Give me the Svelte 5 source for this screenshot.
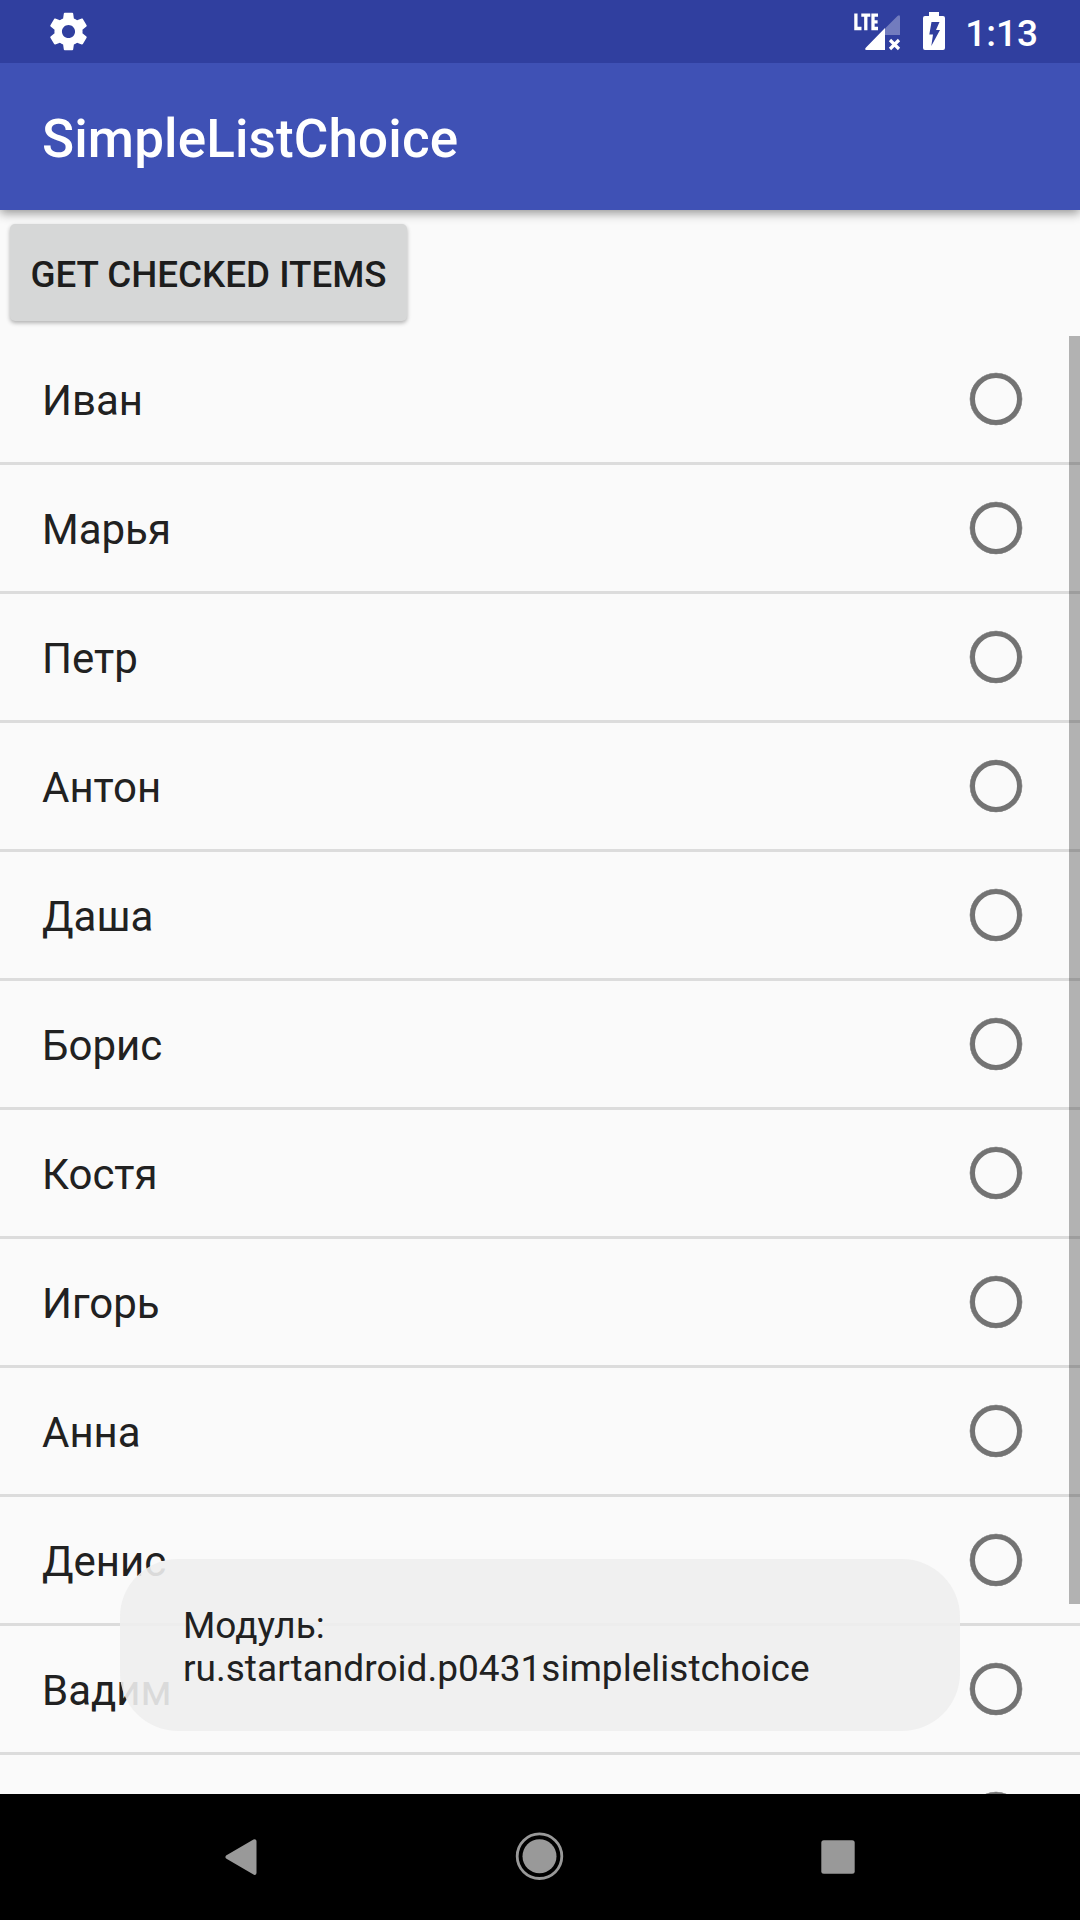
<script>
  const names = [
    'Иван', 'Марья', 'Петр', 'Антон', 'Даша', 'Борис',
    'Костя', 'Игорь', 'Анна', 'Денис', 'Вадим', ''
  ];
  let selected = $state(-1);
</script>

<div class="screen">
  <header class="status">
    <svg class="gear" viewBox="0 0 24 24" width="45" height="45">
      <path fill="#fff" d="M19.43 12.98c.04-.32.07-.64.07-.98s-.03-.66-.07-.98l2.11-1.65c.19-.15.24-.42.12-.64l-2-3.46c-.12-.22-.39-.3-.61-.22l-2.49 1c-.52-.4-1.08-.73-1.69-.98l-.38-2.65A.488.488 0 0 0 14 2h-4c-.25 0-.46.18-.49.42l-.38 2.65c-.61.25-1.17.59-1.69.98l-2.49-1c-.23-.09-.49 0-.61.22l-2 3.46c-.13.22-.07.49.12.64l2.11 1.65c-.04.32-.07.65-.07.98s.03.66.07.98l-2.11 1.65c-.19.15-.24.42-.12.64l2 3.46c.12.22.39.3.61.22l2.49-1c.52.4 1.08.73 1.69.98l.38 2.65c.03.24.24.42.49.42h4c.25 0 .46-.18.49-.42l.38-2.65c.61-.25 1.17-.59 1.69-.98l2.49 1c.23.09.49 0 .61-.22l2-3.46c.12-.22.07-.49-.12-.64l-2.11-1.65zM12 15.500c-1.930 0-3.500-1.570-3.500-3.500s1.570-3.500 3.500-3.500 3.500 1.570 3.500 3.500-1.570 3.500-3.500 3.500z" />
    </svg>
    <div class="tray">
      <svg class="signal" width="50" height="40" viewBox="0 0 50 40">
        <path fill="#fff" fill-opacity=".32" d="M32 16.500 44.500 4Q47 2 47 5V23H32z" />
        <path fill="#fff" d="M32 16v22H13.500Q11 37.500 13 35.500z" />
        <path stroke="#fff" stroke-width="3.200" d="m37 28 9 9m0-9-9 9" />
        <path fill="none" stroke="#fff" stroke-width="3.300" d="M2.900 1.500v15H8.500M8.300 3.100h9M12.800 3v15.200M25 3.100h-5v13.400h5M20 9.800h4.600" />
      </svg>
      <svg class="battery" width="22" height="38" viewBox="0 0 22 38">
        <path fill="#fff" fill-rule="evenodd" d="M6 0h10v4h4q2 0 2 2v30q0 2-2 2H2q-2 0-2-2V6q0-2 2-2h4zM8.500 10 6.300 22.500H10L8.300 34 17 18h-4L16.500 10z" />
      </svg>
      <span class="clock">1:13</span>
    </div>
  </header>

  <div class="appbar"><h1>SimpleListChoice</h1></div>

  <main>
    <button class="action">GET CHECKED ITEMS</button>
    <div class="list">
      {#each names as name, i}
        <label class="row">
          <span>{name}</span>
          <input type="radio" name="person" value={i} bind:group={selected} />
        </label>
      {/each}
      <div class="scrollbar"></div>
    </div>
  </main>

  <nav>
    <div class="key">
      <svg width="60" height="60" viewBox="0 0 60 60">
        <path fill="#999" stroke="#999" stroke-width="4" stroke-linejoin="round" d="M15.500 31 42.500 15.300v31.600z" />
      </svg>
    </div>
    <div class="key">
      <svg width="60" height="60" viewBox="0 0 60 60">
        <circle cx="29.500" cy="30.200" r="17" fill="#999" />
        <circle cx="29.500" cy="30.200" r="22.300" fill="none" stroke="#999" stroke-width="2.800" />
      </svg>
    </div>
    <div class="key">
      <svg width="60" height="60" viewBox="0 0 60 60">
        <rect x="13.300" y="14.300" width="33.400" height="33.400" rx="2.500" fill="#999" />
      </svg>
    </div>
  </nav>

  <div class="toast">Модуль:<br />ru.startandroid.p0431simplelistchoice</div>
</div>

<style>
  .screen {
    position: relative;
    display: flex;
    flex-direction: column;
    width: 1080px;
    height: 1920px;
    overflow: hidden;
    background: #fafafa;
    color: #212121;
    font-family: Roboto, sans-serif;
  }
  .status {
    display: flex;
    flex: none;
    justify-content: space-between;
    height: 63px;
    padding: 0 42px 0 46px;
    background: #303f9f;
    z-index: 2;
  }
  .gear { margin-top: 9px; }
  .tray {
    display: flex;
    align-items: flex-start;
  }
  .signal { margin: 12px 20px 0 0; }
  .battery { margin: 12px 20px 0 0; }
  .clock {
    color: #fff;
    font-size: 37px;
    font-weight: 500;
    line-height: 43px;
    margin-top: 12px;
  }
  .appbar {
    display: flex;
    flex: none;
    align-items: center;
    height: 147px;
    box-sizing: border-box;
    padding: 5px 0 0 42px;
    background: #3f51b5;
    box-shadow: 0 3px 10px rgba(0, 0, 0, 0.42);
    z-index: 1;
  }
  h1 {
    margin: 0;
    color: #fff;
    font-size: 53px;
    font-weight: 500;
    letter-spacing: 0.13px;
    line-height: 62px;
  }
  main {
    display: flex;
    flex: 1;
    flex-direction: column;
    min-height: 0;
  }
  .action {
    flex: none;
    align-self: flex-start;
    width: 397px;
    height: 97px;
    margin: 14px 0 15px 10px;
    padding: 3px 0 0;
    border: 0;
    border-radius: 5px;
    background: #d6d7d7;
    box-shadow: 0 2px 4px rgba(0, 0, 0, 0.3);
    color: #1d1d1d;
    font: 500 36.75px/43px Roboto, sans-serif;
    white-space: nowrap;
  }
  .list {
    position: relative;
    flex: 1;
    min-height: 0;
    overflow: hidden;
  }
  .row {
    display: flex;
    align-items: center;
    justify-content: space-between;
    height: 126px;
    padding: 0 58px 0 42px;
    border-bottom: 3px solid #dcdcdc;
    font-size: 42px;
    line-height: 49px;
  }
  .row span { margin-top: 3px; }
  .row input {
    appearance: none;
    width: 52px;
    height: 52px;
    margin: 0;
    border: 5px solid #737373;
    border-radius: 50%;
    box-shadow: 0 0 0 0.3px #737373;
  }
  .scrollbar {
    position: absolute;
    top: 0;
    right: 0;
    width: 11px;
    height: 1268px;
    background: rgba(0, 0, 0, 0.285);
  }
  nav {
    display: flex;
    flex: none;
    justify-content: center;
    height: 126px;
    background: #000;
  }
  .key {
    display: flex;
    justify-content: center;
    width: 298px;
    padding-top: 32px;
  }
  .toast {
    position: absolute;
    left: 120px;
    top: 1559px;
    box-sizing: border-box;
    width: 840px;
    height: 172px;
    padding: 45px 63px 41px;
    border-radius: 58px;
    background: rgba(238, 238, 238, 0.9);
    font-size: 37px;
    letter-spacing: 0.02px;
    line-height: 43px;
  }
</style>
